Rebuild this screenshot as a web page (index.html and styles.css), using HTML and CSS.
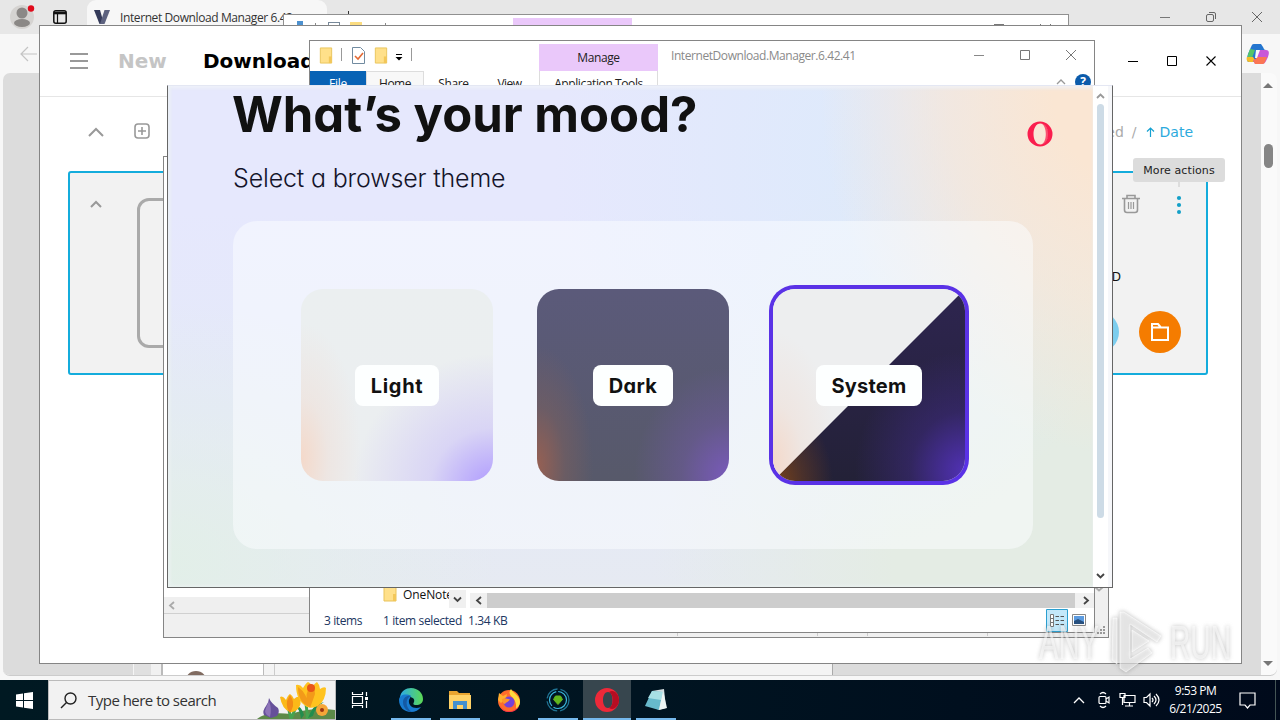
FILE: index.html
```html
<!DOCTYPE html>
<html lang="en">
<head>
<meta charset="utf-8">
<title>Desktop</title>
<link rel="stylesheet" href="styles.css">
</head>
<body>
<div class="desktop">

  <section class="edge">
    <header class="edge-tabs">
      <svg class="avatar" width="26" height="26" viewBox="0 0 26 26"><circle cx="13" cy="14" r="12" fill="#d5d3d1"/><circle cx="13" cy="10" r="5.5" fill="#8b8886"/><ellipse cx="13" cy="20" rx="8" ry="4" fill="#8b8886"/><circle cx="22" cy="5.500" r="3.2" fill="#e00b1c"/></svg>
      <svg class="tab-actions" width="14" height="14" viewBox="0 0 14 14"><rect x=".8" y=".8" width="12.4" height="12.4" rx="2" fill="none" stroke="#111" stroke-width="1.5"/><path d="M1 3h12" stroke="#111" stroke-width="2.6"/><path d="M4.5 3v10" stroke="#111" stroke-width="1.2"/></svg>
      <div class="edge-tab">
        <svg width="18" height="16" viewBox="0 0 18 16"><path d="M1 1h6l4 14H6.500z" fill="#343a59"/><path d="M17 1h-5.500L7 15h4.500z" fill="#5d627f"/></svg>
        <span>Internet Download Manager 6.42</span><span class="tab-close">✕</span>
      </div>
      <span class="newtab"></span>
      <div class="edge-controls">
        <svg width="12" height="12" viewBox="0 0 12 12"><path d="M1 6.5h10" stroke="#777"/></svg>
        <svg width="12" height="12" viewBox="0 0 12 12" fill="none" stroke="#666"><rect x="1.5" y="3.5" width="7" height="7" rx="1.5"/><path d="M4 1.5h5a1.500 1.500 0 0 1 1.500 1.500v5"/></svg>
        <svg width="12" height="12" viewBox="0 0 12 12"><path d="M1 1l10 10M11 1L1 11" stroke="#666"/></svg>
      </div>
    </header>
    <div class="edge-toolbar">
      <svg width="18" height="16" viewBox="0 0 18 16" fill="none" stroke="#c4c4c4" stroke-width="1.2"><path d="M1 8h16M8 1L1 8l7 7"/></svg>
      <svg width="24" height="22" viewBox="0 0 24 22"><path d="M8 1h7l2 3c1 2 1 3 3 3h-6l-3 9c-1 3-3 3-5 3H3C0 19 1 15 2 11l3-7c1-2 1-3 3-3z" fill="#2475cf"/><path d="M4 6l5 1-3 8H2c-1-2 1-6 2-9z" fill="#55c568"/><path d="M1 14h6l2 3-2 2H3c-2 0-3-3-2-5z" fill="#f4bd29"/><path d="M16 21H9l-2-4c2 0 3-1 4-4l2-6h7c4 0 3 4 2 7l-2 4c-1 2-2 3-4 3z" fill="#c957d8"/><path d="M7 17c2 0 3-1 4-3h10l-2 5c-1 2-2 2-4 2H9z" fill="#fb7654"/><path d="M10 7h4l-3 8H9z" fill="#f8f8f8"/></svg>
    </div>
    <div class="edge-page">
      <div class="page-view">
        <div class="page-foot"><div class="foot-side"></div><div class="foot-card"><i></i></div><div class="foot-body"></div></div>
      </div>
      <div class="page-scroll"><i class="tri up"></i><i class="knob"></i><i class="tri down"></i></div>
    </div>
  </section>

  <section class="peek">
    <i class="peek-blue"></i><i class="peek-bar"></i><i class="peek-doc"></i><i class="peek-folder"></i><i class="peek-bar2"></i><i class="peek-tab"></i><i class="peek-max"></i>
    <svg width="11" height="11" viewBox="0 0 11 11"><path d="M0 0l11 11M11 0L0 11" stroke="#777"/></svg>
  </section>

  <section class="fdm">
    <header class="fdm-head">
      <div class="burger"><i></i><i></i><i></i></div>
      <b class="fdm-new">New</b><b class="fdm-dl">Downloads</b>
      <div class="fdm-controls">
        <svg width="12" height="12" viewBox="0 0 12 12"><path d="M1 6.500h10" stroke="#000"/></svg>
        <svg width="12" height="12" viewBox="0 0 12 12"><path d="M1.500 1.500h9v9h-9z" fill="none" stroke="#000"/></svg>
        <svg width="12" height="12" viewBox="0 0 12 12"><path d="M1.500 1.500l9 9M10.500 1.500l-9 9" stroke="#000" stroke-width="1.100"/></svg>
      </div>
    </header>
    <div class="fdm-bar">
      <svg width="16" height="10" viewBox="0 0 16 10"><path d="M1 9l7-7 7 7" fill="none" stroke="#999" stroke-width="2"/></svg>
      <svg class="plus" width="16" height="16" viewBox="0 0 16 16" fill="none" stroke="#999" stroke-width="1.600"><rect x="1" y="1" width="14" height="14" rx="3"/><path d="M8 4v8M4 8h8"/></svg>
      <div class="sort"><span>Speed</span><span class="slash">/</span><svg width="9" height="10" viewBox="0 0 9 10"><path d="M4.500 10V1M1 4.500L4.500 1 8 4.500" fill="none" stroke="#16a1d1" stroke-width="1.200"/></svg><span class="date">Date</span></div>
    </div>
    <div class="fdm-item">
      <svg width="12" height="8" viewBox="0 0 12 8"><path d="M1 7l5-5 5 5" fill="none" stroke="#999" stroke-width="2"/></svg>
      <div class="thumb"></div>
      <div class="item-side">
        <div class="item-icons">
          <svg width="20" height="20" viewBox="0 0 20 20" fill="none" stroke="#999" stroke-width="1.600"><path d="M1 4.500h18M6 4.500V1.500h8v3M3.500 4.500V16a2.500 2.500 0 0 0 2.500 2.500h8a2.500 2.500 0 0 0 2.500-2.500V4.500"/><path d="M7.500 8v7M10 8v7M12.500 8v7" stroke-width="1.200"/></svg>
          <svg width="6" height="20" viewBox="0 0 6 20" fill="#13a0c8"><circle cx="3" cy="4" r="2.100"/><circle cx="3" cy="11" r="2.100"/><circle cx="3" cy="18" r="2"/></svg>
        </div>
        <div class="item-note">D</div>
        <div class="item-btns"><i></i><span><svg width="20" height="20" viewBox="0 0 20 20"><path d="M2 6.500V2h6l2.500 3M2 5.500h16V18H2z" fill="none" stroke="#fff" stroke-width="2"/></svg></span></div>
      </div>
    </div>
    <div class="tip">More actions</div>
  </section>

  <section class="winb">
    <div class="winb-scroll"><svg width="7" height="9" viewBox="0 0 7 9"><path d="M6 1L2 4.500 6 8" fill="none" stroke="#aaa" stroke-width="1.800"/></svg></div>
    <div class="winb-status"><i></i><i></i><i></i><i></i></div>
    <div class="winb-v"><svg width="10" height="6" viewBox="0 0 10 6"><path d="M1 1l4 3.500L9 1" fill="none" stroke="#aaa" stroke-width="1.800"/></svg><svg class="grip" width="9" height="9" viewBox="0 0 9 9"><path d="M6 1h2M3 4h2M6 4h2M0 7h2M3 7h2M6 7h2" stroke="#999" stroke-width="2"/></svg></div>
  </section>

  <section class="explorer">
    <header class="ex-title">
      <div class="ex-quick">
        <svg width="14" height="17" viewBox="0 0 14 18"><path d="M1 1h12v16H1z" fill="#ffe08a" stroke="#e9c35b"/><path d="M10 10h3v7h-3z" fill="#f3c759"/></svg>
        <i></i>
        <svg width="13" height="17" viewBox="0 0 13 17"><path d="M.5.500h8l4 4v12H.500z" fill="#fff" stroke="#718ba0"/><path d="M3 9l3 3 5-6" fill="none" stroke="#e36a35" stroke-width="1.600"/></svg>
        <svg width="14" height="17" viewBox="0 0 14 18"><path d="M1 1h12v16H1z" fill="#ffe08a" stroke="#e9c35b"/><path d="M10 10h3v7h-3z" fill="#f3c759"/></svg>
        <svg class="caret" width="8" height="7" viewBox="0 0 8 7"><path d="M1 .5h6" stroke="#000"/><path d="M.5 3h7L4 6.500z"/></svg>
        <i></i>
      </div>
      <div class="ex-manage">Manage</div>
      <div class="ex-name">InternetDownload.Manager.6.42.41</div>
      <div class="ex-controls">
        <svg width="12" height="12" viewBox="0 0 12 12"><path d="M1 6.500h10" stroke="#888"/></svg>
        <svg width="12" height="12" viewBox="0 0 12 12"><path d="M1.500 1.500h9v9h-9z" fill="none" stroke="#777"/></svg>
        <svg width="12" height="12" viewBox="0 0 12 12"><path d="M1 1l10 10M11 1L1 11" stroke="#777"/></svg>
      </div>
    </header>
    <nav class="ex-tabs"><b>File</b><span class="home">Home</span><span class="share">Share</span><span class="view">View</span><span class="app">Application Tools</span>
      <div class="ex-help"><svg width="10" height="6" viewBox="0 0 10 6"><path d="M1 5l4-4 4 4" fill="none" stroke="#999" stroke-width="1.300"/></svg><em>?</em></div>
    </nav>
    <div class="ex-body">
      <div class="tree"><svg width="14" height="16" viewBox="0 0 14 16"><path d="M1 0h12v15H1z" fill="#ffe08a" stroke="#e9c35b"/><path d="M10 8h3v7h-3z" fill="#f3c759"/></svg><span>OneNote</span></div>
      <div class="tree-sc"><svg width="9" height="7" viewBox="0 0 9 7"><path d="M1 1.500L4.500 5 8 1.500" fill="none" stroke="#444" stroke-width="1.800"/></svg></div>
      <div class="hsc"><svg width="7" height="9" viewBox="0 0 7 9"><path d="M6 1L2 4.500 6 8" fill="none" stroke="#444" stroke-width="1.800"/></svg><i></i><svg class="next" width="7" height="9" viewBox="0 0 7 9"><path d="M1 1l4 3.500L1 8" fill="none" stroke="#444" stroke-width="1.800"/></svg></div>
    </div>
    <footer class="ex-status"><span class="s1">3 items</span><span class="s2">1 item selected</span><span class="s3">1.34 KB</span>
      <div class="views">
        <svg width="22" height="23" viewBox="0 0 22 23"><path d="M.5.500h21v22H.500z" fill="#c3e8fa" stroke="#2b9fd0"/><path d="M4.500 5.500h3v12h-3zM4.500 9.500h3M4.500 13.500h3" fill="#fff" stroke="#777"/><path d="M9.500 7.500h3.500M9.500 11.500h3.500M9.500 15.500h3.500M14.500 7.500H18M14.500 11.500H18M14.500 15.500H18" stroke="#555"/></svg>
        <svg width="14" height="12" viewBox="0 0 14 12"><path d="M.5.500h13v11H.500z" fill="#fff" stroke="#888"/><path d="M2 2h10v8H2z" fill="#5b9be0"/><path d="M2 7l4-2 6 3v2H2z" fill="#27507f"/></svg>
      </div>
    </footer>
  </section>

  <section class="opera">
    <div class="opera-page">
      <header><h1>What’s your mood?</h1>
        <svg width="26" height="26" viewBox="0 0 26 26"><path fill-rule="evenodd" fill="#fa1e4e" d="M13 .5a12.500 12.500 0 1 0 0 25a12.500 12.500 0 1 0 0-25zM13.500 2.500C18 2.500 21 7 21 13s-3 10.500-7.500 10.500S6.500 18.500 6.500 13 9 2.500 13.500 2.500z"/><path d="M13.500 2.200c3.500.800 5.300 5.300 5.300 10.800s-1.800 10-5.300 10.800C18 23.800 21.500 19 21.500 13S18 2.200 13.500 2.200z" fill="#fa1e4e" fill-opacity=".75"/></svg>
      </header>
      <p class="sub">Select a browser theme</p>
      <div class="themes">
        <div class="theme light"><span>Light</span></div>
        <div class="theme dark"><span>Dark</span></div>
        <div class="theme system"><span>System</span></div>
      </div>
    </div>
    <div class="opera-scroll"><svg width="9" height="6" viewBox="0 0 9 6"><path d="M1 5l3.500-3.500L8 5" fill="none" stroke="#999" stroke-width="1.800"/></svg><i></i><svg width="9" height="6" viewBox="0 0 9 6"><path d="M1 1l3.500 3.500L8 1" fill="none" stroke="#444" stroke-width="1.900"/></svg></div>
  </section>

  <footer class="taskbar">
    <div class="start"><svg width="17" height="17" viewBox="0 0 17 17"><path d="M0 2.400L7 1.400V8H0zM8 1.200L17 0v8H8zM0 9h7v6.600l-7-1zM8 9h9v8l-9-1.200z" fill="#fff"/></svg></div>
    <div class="search">
      <svg width="17" height="17" viewBox="0 0 17 17"><circle cx="10.500" cy="6.500" r="5.500" fill="none" stroke="#222" stroke-width="1.400"/><path d="M6.500 10.500L1 16" stroke="#222" stroke-width="1.400"/></svg>
      <span>Type here to search</span>
      <svg class="flowers" width="80" height="38" viewBox="0 0 80 38"><path d="M2 38c6-5 17-7 34-5 14-5 29-6 44-4v9z" fill="#5d8a48"/><path d="M33 25l3 13 5-12M51 20c0 8 2 12 1 18l12-16" fill="none" stroke="#45a34f" stroke-width="3"/><path d="M46 38q-1-11-8-15 9 2 11 11zM53 37q5-14 16-16-9 5-11 14z" fill="#238c4d"/><path d="M14 17q2 5 9 10 2 4-1 8l-6 2-7-3q-2-4 2-9 3-4 3-8z" fill="#66509a"/><path d="M14 20q3 7 1 16-7-3-4-9z" fill="#8e75b8"/><path d="M25 16q3-2 6 3 2-5 4-6 3 2 4 5 3-3 6-2 2 7-2 12-4 4-8 3-8-3-10-15z" fill="#fbb918"/><path d="M35 14q5 7 2 14l-2 4q-4-5-3-12z" fill="#f28b16"/><path d="M41 4q4-1 7 3 3-5 5-6 3 1 4 5 3-4 5-5 3 3 3 7 4-3 6-1 0 12-8 18-6 3-11 1-11-6-11-22z" fill="#ffc31f"/><path d="M56 3q6 6 3 13l-4 11q-6-10-2-18zM43 6q9 6 11 20-11-5-11-20z" fill="#f39a19"/><circle cx="56" cy="7" r="4" fill="#e95716"/><circle cx="67" cy="29" r="6" fill="#f5a638"/><circle cx="67" cy="29" r="2" fill="#9c3511"/></svg>
    </div>
    <div class="apps">
      <div class="app first"><svg width="18" height="18" viewBox="0 0 18 18" fill="none" stroke="#fff" stroke-width="1.200"><path d="M1.500 1v2.500h10V1M1.500 17v-2.500h10V17M1.500 5.500h10v7h-10zM15.500 1v4M15.500 10v7"/><path d="M14 6h3v3h-3z" fill="#fff" stroke="none"/></svg></div>
      <div class="app run"><svg width="24" height="24" viewBox="0 0 24 24"><defs><linearGradient id="eg" x1="0" x2="1"><stop stop-color="#2cabe7"/><stop offset="1" stop-color="#5cda54"/></linearGradient></defs><path d="M1 9C2 3 7 0 12 0c7 0 12 5 12 11 0 4-3 6-7 6-3 0-3-1-2-3 2-5-7-8-14-2z" fill="url(#eg)"/><path d="M0 12c0 7 5 12 12 12 4 0 8-2 10-5-7 3-13-1-12-7l2-4C7 5 0 7 0 12z" fill="#187bd0"/><path d="M12 8c-6 2-6 12 1 16-3 0-9-3-9-10 0-4 4-7 8-6z" fill="#1459a4"/></svg></div>
      <div class="app run"><svg width="24" height="22" viewBox="0 0 24 22"><path d="M1 2h8l2 2h11v16H1z" fill="#e9a530"/><path d="M1 6h22v14H1z" fill="#ffd267"/><path d="M5 20v-8h14v8h-4v-4H9v4z" fill="#4390cf"/></svg></div>
      <div class="app"><svg width="24" height="24" viewBox="0 0 24 24"><circle cx="12" cy="13" r="11" fill="#ff6b2b"/><path d="M2 5l4 3 4-2-1 5-5 4-3-3z" fill="#ffae2d"/><path d="M14 1c2 4 9 7 9 13 0 3-2 6-4 7 1-8-3-11-5-13-2-2-2-5 0-7z" fill="#ffd93d"/><path d="M3 18c4 7 14 7 19 0-2 7-16 9-19 0z" fill="#fa294e"/><circle cx="12" cy="14" r="5.500" fill="#7542d7"/><path d="M5 11c4-2 6 1 8 0-1 3-4 3-5 5-2 0-3-3-3-5z" fill="#ff9529"/></svg></div>
      <div class="app run"><svg width="24" height="24" viewBox="0 0 24 24" fill="none"><circle cx="12" cy="12" r="11" stroke="#1f7394" stroke-width="1.300" stroke-dasharray="15 3"/><circle cx="12" cy="12" r="8.500" stroke="#3dbbe0" stroke-width="1.200" stroke-dasharray="18 2"/><path d="M9.500 8h5l2 3.500-4.500 5-4.500-5z" fill="#62b71c" stroke="#62b71c"/></svg></div>
      <div class="app run active"><svg width="24" height="24" viewBox="0 0 24 24"><path fill-rule="evenodd" d="M12 0a12 12 0 1 0 0 24a12 12 0 1 0 0-24zm1 4c3 0 4.500 3.500 4.500 8s-1.500 8-4.500 8-5-3.500-5-8 2-8 5-8z" fill="#ed2939"/><path d="M14 4c5-3 10 2 10 8s-5 11-10 8c5-2 5-14 0-16z" fill="#b60d22"/></svg></div>
      <div class="app run"><svg width="24" height="24" viewBox="0 0 24 24"><path d="M8 3l12-2 2 19-8 2z" fill="#d3dee1"/><path d="M8 3l11 1-4 18-14-4z" fill="#67b9cb"/><path d="M8 3l11 1-2 8-13-2z" fill="#a8e0e5"/><path d="M19 3l4 17-8 2z" fill="#edf5f4"/></svg></div>
    </div>
    <div class="tray">
      <svg width="12" height="8" viewBox="0 0 12 8"><path d="M1 7l5-5 5 5" fill="none" stroke="#fff" stroke-width="1.300"/></svg>
      <svg width="14" height="18" viewBox="0 0 14 18" fill="none" stroke="#fff" stroke-width="1.200"><rect x="2" y="5.500" width="7" height="7" rx="1"/><path d="M9 8l3-2v6l-3-2M3 3q3-3 6 0M3 15q3 3 6 0"/></svg>
      <svg width="17" height="16" viewBox="0 0 17 16" fill="none" stroke="#fff" stroke-width="1.200"><path d="M5 3.500h11v7H5zM10.500 10.500v3M6 14h8M1 1.500h5v4H1zM3.500 5.500V13"/></svg>
      <svg width="17" height="16" viewBox="0 0 17 16" fill="none" stroke="#fff" stroke-width="1.200"><path d="M1 5.500h2.500L7 2v12l-3.500-3.500H1zM9 6q2 2 0 4M11 4q4 4 0 8M13 2q6 6 0 12"/></svg>
      <div class="clock"><span>9:53 PM</span><span>6/21/2025</span></div>
      <svg width="17" height="17" viewBox="0 0 17 17"><path d="M1 1h15v12h-5l-2.500 3L6 13H1z" fill="none" stroke="#fff" stroke-width="1.200"/></svg>
      <i class="show"></i>
    </div>
  </footer>

  <svg class="mark" width="204" height="70" viewBox="0 0 204 70">
    <g fill="#fff" fill-opacity=".55" stroke="#fff" stroke-opacity=".55" font-size="49">
      <text x="3" y="53" textLength="60" lengthAdjust="spacingAndGlyphs" class="mark-text">ANY</text>
      <text x="134" y="53" textLength="61" lengthAdjust="spacingAndGlyphs" class="mark-text">RUN</text>
      <path d="M88 6l37 24-4 6-27-18v35l18-11 4 5-26 19-6-4V6zM77 12h4v46l-5-4z" stroke-width="1"/>
      <path d="M96 24l17 11-17 11z"/>
    </g>
  </svg>
</div>
</body>
</html>
```
FILE: styles.css
```css
* { box-sizing: border-box; }
body { margin: 0; font-family: "Open Sans", "Noto Sans", sans-serif; font-size: 12px; color: #222; }
svg { display: block; flex: none; }
i { display: block; font-style: normal; flex: none; }
.desktop { position: relative; width: 1280px; height: 720px; overflow: hidden; background: #e6e6e6; }
.desktop > section { position: absolute; overflow: hidden; }

/* Browser */
.edge { left: 0; top: 0; width: 1280px; height: 680px; background: #f7f7f7; display: flex; flex-direction: column; }
.edge-tabs { height: 34px; background: #e7e7e7; display: flex; align-items: center; padding-left: 9px; }
.tab-actions { margin-left: 18px; }
.avatar { margin-top: -2px; }
.edge-tab { margin-left: 20px; width: 240px; height: 34px; background: #f7f7f7; border-radius: 9px 9px 0 0; display: flex; align-items: center; padding-left: 6px; white-space: nowrap; overflow: hidden; color: #333; }
.edge-tab span { margin-left: 9px; letter-spacing: -.4px; }
.edge-tab .tab-close { color: #777; }
.newtab { width: 1px; height: 13px; background: #333; margin-left: 21px; }
.edge-controls { margin-left: auto; display: flex; gap: 34px; padding-right: 17px; }
.edge-toolbar { height: 39px; display: flex; align-items: center; justify-content: space-between; padding: 1px 10px 0 20px; }
.edge-page { flex: 1; display: flex; margin: 0 3px 4px; border-radius: 7px; overflow: hidden; background: #fafafa; border-bottom: 1px solid #ccc; }
.page-view { width: 1258px; background: #dcdcdc; display: flex; align-items: flex-end; padding-left: 130px; }
.page-foot { display: flex; height: 13px; width: 700px; background: #f4f4f4; border-right: 1px solid #aaa; border-left: 1px solid #f5f5f5; }
.foot-side { width: 28px; background: #f1f1f1; border-left: 17px solid #e0e0e0; border-right: 1px solid #bbb; }
.foot-card { width: 102px; background: #fff; border: 0 solid #bbb; border-width: 0 1px; overflow: hidden; }
.foot-card i { width: 22px; height: 22px; border-radius: 50%; background: #806b60; margin: 9px 0 0 22px; }
.foot-body { width: 11px; border-right: 1px solid #ccc; }
.page-scroll { flex: 1; display: flex; flex-direction: column; align-items: center; padding: 10px 2px 9px 0; }
.tri { width: 0; height: 0; border: 5px solid transparent; }
.tri.up { border-top: 0; border-bottom-color: #777; }
.tri.down { border-bottom: 0; border-top-color: #777; margin-top: auto; }
.knob { width: 9px; height: 24px; border-radius: 5px; background: #868686; margin-top: 56px; }

/* Sliver of a folder window */
.peek { left: 283px; top: 14px; width: 786px; height: 30px; border: 1px solid #909090; background: #fff; display: flex; padding-top: 3px; }
.peek-blue { width: 6px; height: 12px; background: #4d91cf; margin: 3px 0 0 13px; }
.peek-bar { width: 1px; height: 12px; background: #888; margin: 5px 0 0 12px; }
.peek-doc { width: 12px; height: 12px; border: 1px solid #789; margin: 4px 0 0 12px; }
.peek-folder { width: 12px; height: 12px; background: #fbdc80; margin: 4px 0 0 10px; }
.peek-bar2 { width: 1px; height: 12px; background: #888; margin: 5px 0 0 23px; }
.peek-tab { width: 119px; height: 20px; background: #eac8fa; margin-left: 127px; }
.peek-max { width: 10px; height: 10px; border: 1px solid #777; margin: 6px 36px 0 362px; }
.peek svg { margin-top: 6px; }

/* Download manager */
.fdm { left: 39px; top: 25px; width: 1203px; height: 639px; border: 1px solid #858585; background: #fff; font-family: "DejaVu Sans", sans-serif; }
.fdm-head { height: 71px; border-bottom: 1px solid #e6e6e6; display: flex; align-items: center; padding: 0 24px 0 30px; }
.burger { width: 48px; display: flex; flex-direction: column; gap: 5px; }
.burger i { width: 18px; height: 2px; background: #999; }
.fdm-head b { font-size: 20px; line-height: 24px; }
.fdm-new { width: 85px; color: #c5c5c5; }
.fdm-dl { color: #000; }
.fdm-controls { margin-left: auto; display: flex; gap: 27px; }
.fdm-bar { height: 70px; display: flex; align-items: center; padding: 0 48px; }
.plus { margin-left: 30px; margin-top: -2px; }
.sort { margin-left: auto; display: flex; align-items: center; font-size: 14px; color: #aaa; }
.slash { margin: 0 9px 0 9px; }
.date { color: #2caadd; margin-left: 5px; }
.sort > :first-child { margin-right: -1px; }
.fdm-item { margin: 4px 33px 0 28px; height: 204px; border: 2px solid #14acdc; border-radius: 3px; background: #f2f2f2; display: flex; padding: 25px 25px 0 20px; }
.fdm-item > svg { margin-top: 2px; }
.thumb { width: 180px; height: 150px; border: 3px solid #aaa; border-radius: 12px; margin-left: 35px; }
.item-side { margin-left: auto; display: flex; flex-direction: column; align-items: flex-end; }
.item-icons { display: flex; gap: 35px; margin: -4px -1px 0 0; }
.item-note { font-size: 12px; margin: 56px 60px 0 0; color: #111; }
.item-btns { display: flex; gap: 20px; margin-top: 27px; }
.item-btns i, .item-btns span { width: 42px; height: 42px; border-radius: 50%; background: #f57c00; display: flex; align-items: center; justify-content: center; }
.item-btns i { background: #7ccdee; }
.tip { position: absolute; left: 1093px; top: 132px; width: 92px; height: 24px; border-radius: 3px; background: #dcdcdc; text-align: center; line-height: 25px; font-size: 11px; letter-spacing: .1px; }
.tip::after { content: ""; position: absolute; left: 45px; top: 24px; width: 2px; height: 5px; background: #ddd; }

/* Rear folder window */
.winb { left: 163px; top: 156px; width: 946px; height: 482px; border: 1px solid #858585; background: #fff; display: flex; flex-direction: column; justify-content: flex-end; }
.winb-scroll { height: 17px; background: #efefef; border-bottom: 1px solid #d0d0d0; display: flex; align-items: center; padding-left: 4px; }
.winb-status { height: 23px; background: #f0f0f0; display: flex; gap: 119px; padding-left: 513px; }
.winb-status i { width: 1px; height: 22px; background: #ccc; }
.winb-status i:nth-child(2) { margin-left: 20px; }
.winb-status i:nth-child(3) { margin-left: -70px; }
.winb-v { position: absolute; right: 0; bottom: 0; width: 13px; height: 55px; background: #f0f0f0; display: flex; flex-direction: column; align-items: center; padding-top: 4px; }
.winb-v > svg:first-child { margin-left: -5px; }
.grip { margin-top: 34px; }

/* Folder window */
.explorer { left: 309px; top: 40px; width: 786px; height: 593px; border: 1px solid #858585; background: #fff; display: flex; flex-direction: column; letter-spacing: -.25px; }
.ex-title { height: 30px; display: flex; }
.ex-quick { width: 229px; display: flex; padding: 6px 0 0 9px; }
.ex-quick i { width: 1px; height: 13px; background: #999; margin: 1px 10px 0 8px; }
.ex-quick svg + svg { margin-left: 9px; }
.ex-quick .caret.caret { margin: 7px 0 0 7px; }
.ex-manage { width: 119px; height: 27px; margin-top: 3px; background: #eac8fa; text-align: center; line-height: 28px; letter-spacing: -.4px; }
.ex-name { padding: 6px 0 0 13px; color: #8a8a8a; letter-spacing: -.43px; }
.ex-controls { margin-left: auto; display: flex; gap: 34px; padding: 8px 17px 0 0; }
.ex-tabs { height: 22px; display: flex; line-height: 25px; text-align: center; }
.ex-tabs b { width: 56px; background: #0863b5; color: #fff; font-weight: 400; }
.ex-tabs .home { width: 58px; background: #f8f8f8; border: 1px solid #ddd; border-bottom: 0; line-height: 23px; letter-spacing: -.5px; }
.share { width: 59px; letter-spacing: -.4px; }
.view { width: 53px; letter-spacing: -.5px; }
.ex-tabs .app { margin-left: 3px; width: 119px; border: 1px solid #ddd; border-width: 0 1px; letter-spacing: -.4px; }
.ex-help { margin-left: auto; display: flex; align-items: center; gap: 9px; padding-right: 3px; }
.ex-help em { width: 16px; height: 16px; border-radius: 50%; background: #0b5bab; color: #fff; font: bold 12px/16px "Open Sans", sans-serif; }
.ex-body { flex: 1; display: flex; align-items: flex-end; }
.tree { width: 139px; height: 28px; display: flex; align-items: center; padding-left: 73px; overflow: hidden; color: #111; }
.tree span { margin-left: 6px; letter-spacing: -.1px; }
.tree-sc { width: 17px; height: 18px; background: #f0f0f0; display: flex; align-items: center; justify-content: center; }
.hsc { width: 624px; height: 15px; margin-left: 4px; background: #f0f0f0; display: flex; align-items: center; }
.hsc > svg { margin: 0 5px 0 5px; }
.hsc > .next { margin: 0 0 0 8px; }
.hsc i { width: 588px; height: 15px; background: #cdcdcd; }
.ex-status { height: 24px; display: flex; align-items: center; padding-left: 14px; color: #203661; letter-spacing: -.38px; }
.s1 { width: 59px; }
.s2 { width: 85px; }
.ex-status span { white-space: nowrap; }
.views { margin-left: auto; padding-right: 8px; display: flex; gap: 4px; align-items: center; }

/* Theme chooser */
.opera { left: 167px; top: 85px; width: 946px; height: 503px; border: 1px solid #666; border-top-color: #e4e7f3; background: #f6f7fa; display: flex; font-family: Inter, "Noto Sans", sans-serif; }
.opera-page { width: 925px; padding: 0 60px 0 65px; overflow: hidden; box-shadow: inset 3px -2px 3px rgba(236, 243, 243, .6), inset 0 3px 3px rgba(240, 242, 248, .7);
  background:
    radial-gradient(ellipse 310px 370px at 104% 0%, #fae6d3 25%, rgba(248, 231, 214, .7) 60%, rgba(245, 233, 218, 0) 100%),
    radial-gradient(ellipse 300px 400px at 74% 14%, rgba(221, 234, 251, .9), rgba(221, 234, 251, .4) 55%, rgba(221, 234, 251, 0)),
    radial-gradient(ellipse 330px 260px at 0% 95%, #e2efe8, rgba(228, 240, 232, .4) 50%, rgba(228, 240, 232, 0)),
    radial-gradient(ellipse 440px 500px at 100% 95%, #e4ece4 45%, rgba(228, 237, 230, 0)),
    linear-gradient(#e6e8fd 25%, #e4e9f8 65%, #e6eaf2); }
.opera-page header { display: flex; justify-content: space-between; height: 72px; }
h1 { margin: 0; font-size: 49px; line-height: 58px; font-weight: 700; color: #111; white-space: nowrap; font-feature-settings: "cv11"; letter-spacing: 0; margin-left: -1px; }
.opera-page header svg { margin: 35px -20px 0 0; }
.sub { margin: 0; height: 63px; font-size: 25px; line-height: 40px; font-weight: 300; font-feature-settings: "cv11"; color: #14142a; letter-spacing: -.16px; }
.themes { width: 800px; height: 328px; border-radius: 24px; background: rgba(252, 253, 255, .5); display: flex; justify-content: center; align-items: center; gap: 44px; }
.theme { width: 192px; height: 192px; border-radius: 22px; display: flex; align-items: center; justify-content: center; }
.theme span { height: 41px; line-height: 42px; padding: 0 16px; border-radius: 8px; background: #fdffff; font-size: 20px; font-weight: 700; color: #111; font-feature-settings: "cv11"; }
.light span { letter-spacing: .7px; }
.dark span { letter-spacing: .35px; }
.system span { letter-spacing: .2px; }
.light { background: radial-gradient(ellipse 60px 135px at 0 88%, #f4d9ca, rgba(240, 222, 213, .5) 45%, rgba(238, 230, 226, 0)), radial-gradient(ellipse 140px 135px at 100% 104%, #ad98ff, rgba(205, 196, 248, .6) 45%, rgba(228, 224, 240, 0)), linear-gradient(#ebeff0, #ebeef0); }
.dark { background: radial-gradient(ellipse 56px 120px at 0 92%, #966053, rgba(130, 96, 90, .45) 50%, rgba(110, 96, 93, 0)), radial-gradient(ellipse 95px 110px at 100% 98%, #795abb, rgba(115, 90, 170, .45) 50%, rgba(100, 90, 140, 0)), linear-gradient(#5b5a7a, #57596a); }
.system { box-shadow: 0 0 0 4px #5a32e6; background: linear-gradient(135deg, #edeeef 0 49.800%, transparent 50.200%), radial-gradient(ellipse 60px 85px at 0 102%, #7c4318, rgba(113, 64, 30, .5) 50%, rgba(113, 64, 30, 0)), radial-gradient(ellipse 110px 120px at 100% 95%, #5131b5, rgba(70, 45, 150, .4) 50%, rgba(60, 40, 120, 0)), linear-gradient(#2e2550, #232137); position: relative; }
.system::before { content: ""; position: absolute; inset: 0; border-radius: inherit; clip-path: polygon(0 0, 100% 0, 0 100%); background: radial-gradient(ellipse 65px 130px at 0 90%, #f4d9ca, rgba(240, 222, 213, .5) 45%, rgba(244, 230, 222, 0)); }
.system span { position: relative; }
.opera-scroll { width: 15px; background: #fff; display: flex; flex-direction: column; align-items: center; padding: 7px 0 8px; }
.opera-scroll i { width: 7px; height: 414px; margin-top: 5px; background: #cddbe6; border-radius: 4px; }
.opera-scroll svg:last-child { margin-top: auto; }

/* Taskbar */
.taskbar { position: absolute; left: 0; top: 680px; width: 1280px; height: 40px; background: linear-gradient(90deg, #001922, #001421 50%, #000a1b); display: flex; }
.start { width: 48px; display: flex; align-items: center; justify-content: center; }
.search { width: 288px; height: 40px; background: #f2f2f2; border: 1px solid #bbb; display: flex; align-items: center; padding-left: 11px; font-size: 15px; color: #333; overflow: hidden; }
.search span { width: 166px; margin-left: 11px; letter-spacing: -.52px; white-space: nowrap; }
.flowers { margin-left: 2px; }
.apps { display: flex; }
.apps .app { width: 49px; height: 40px; display: flex; align-items: center; justify-content: center; }
.apps .first { width: 50px; padding-right: 3px; }
.apps .run { background: linear-gradient(#76b9ed, #76b9ed) 50% 100% / 40px 2px no-repeat; }
.apps .active { width: 48px; margin: 0 0 0 1px; background: linear-gradient(#76b9ed, #76b9ed) 50% 100% / 48px 2px no-repeat, #37464e; }
.tray { margin-left: auto; display: flex; align-items: center; color: #fff; }
.tray svg:nth-child(1) { margin-right: 1px; }
.tray svg:nth-child(2) { margin-left: 11px; }
.tray svg:nth-child(3) { margin-left: 8px; }
.tray svg:nth-child(4) { margin-left: 7px; }
.clock { width: 71px; text-align: center; line-height: 18px; display: flex; flex-direction: column; letter-spacing: -.5px; }
.tray .clock + svg { margin-left: 8px; }
.show { width: 1px; height: 40px; background: #455; margin: 0 4px 0 19px; }
.mark { position: absolute; left: 1036px; top: 606px; filter: drop-shadow(0 0 2px rgba(100, 100, 100, .7)); }
.mark-text { font-family: "Liberation Sans", sans-serif; stroke-width: 0; }
```
